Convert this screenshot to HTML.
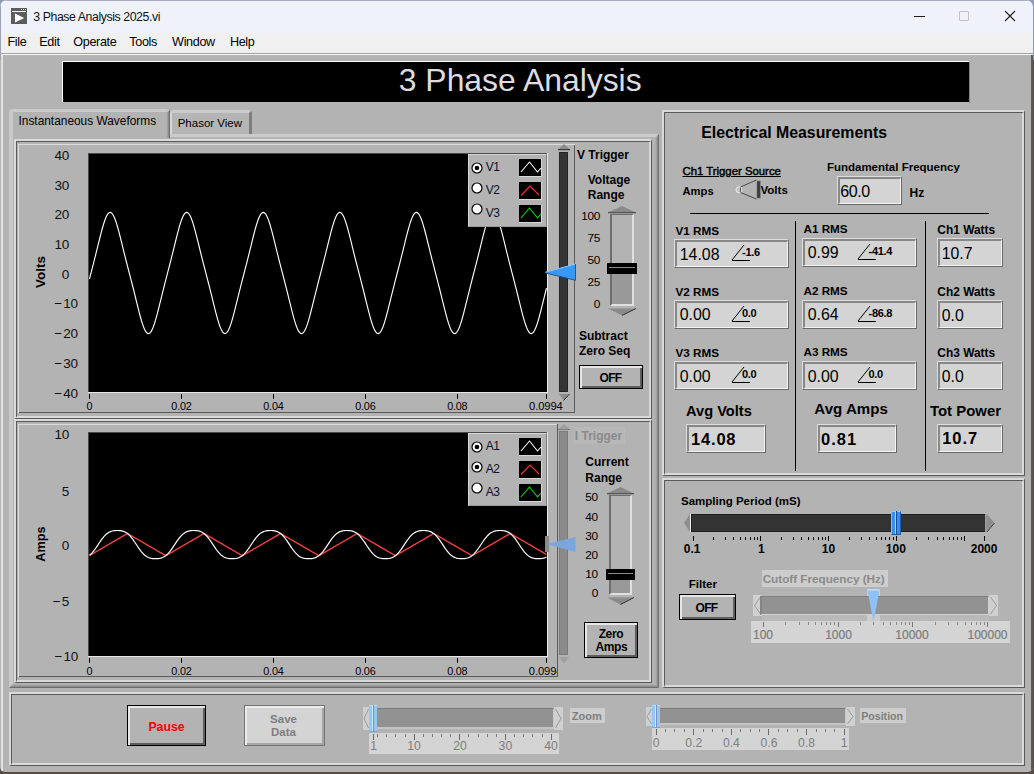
<!DOCTYPE html>
<html><head><meta charset="utf-8">
<style>
*{margin:0;padding:0;box-sizing:border-box}
html,body{width:1034px;height:774px;overflow:hidden;background:#584c42;font-family:"Liberation Sans",sans-serif}
.a{position:absolute}
.t{position:absolute;white-space:nowrap;line-height:1}
.fr{position:absolute;border-top:2px solid #dadada;border-left:2px solid #dadada;border-right:1px solid #5a5a5a;border-bottom:1px solid #5a5a5a}
.fr>.in{position:absolute;left:0;top:0;right:0;bottom:0;border-top:1px solid #5a5a5a;border-left:1px solid #5a5a5a;border-right:2px solid #dadada;border-bottom:2px solid #dadada}
.nb{position:absolute;background:#d4d4d4;border-top:1px solid #dedede;border-left:1px solid #dedede;border-right:1px solid #6a6a6a;border-bottom:1px solid #6a6a6a}
.nb>.in{position:absolute;left:0;top:0;right:0;bottom:0;border-top:2px solid #888888;border-left:2px solid #888888;border-right:1px solid #f4f4f4;border-bottom:1px solid #f4f4f4}
svg{position:absolute;overflow:visible}
</style></head><body>
<div class="a" style="left:0;top:0;width:1034px;height:60px;background:#8d9ab8"></div>
<div class="a" style="left:0;top:0;width:1033px;height:772px;background:#b3b3b3;border-radius:7px 7px 5px 5px;overflow:hidden">

<div class="a" style="left:0px;top:0px;width:1034px;height:33px;background:#eff2fa"></div>
<div class="a" style="left:0px;top:0px;width:1034px;height:1px;background:#a6acbc"></div>
<div class="a" style="left:0px;top:33px;width:1034px;height:20px;background:#f0f0f0"></div>
<div class="a" style="left:0px;top:53px;width:1034px;height:1px;background:#a2a2a2"></div>
<div class="a" style="left:0px;top:54px;width:1034px;height:1px;background:#fafafa"></div>
<div class="a" style="left:0px;top:0px;width:1px;height:60px;background:#9aa2b8"></div>
<div class="a" style="left:1px;top:55px;width:2px;height:717px;background:#e2e2e2"></div>
<div class="a" style="left:1031px;top:55px;width:2px;height:717px;background:#5a5a5a"></div>
<svg style="left:11px;top:8px" width="16" height="16" viewBox="0 0 16 16">
<rect x="0" y="0" width="16" height="16" fill="#5c5c5c"/>
<rect x="1" y="3" width="14" height="1" fill="#f4f4f4"/>
<rect x="10" y="1" width="1" height="1" fill="#e8e8e8"/><rect x="12" y="1" width="1" height="1" fill="#e8e8e8"/><rect x="14" y="1" width="1" height="1" fill="#e8e8e8"/>
<path d="M4 5.6 L13.2 10.1 L4 14.6 Z" fill="#fff"/>
</svg>
<div class="t" style="left:33.34px;top:11.00px;font-size:12.3px;color:#111;letter-spacing:-0.42px">3 Phase Analysis 2025.vi</div>
<div class="a" style="left:914px;top:16px;width:11px;height:1px;background:#1e1e1e"></div>
<div class="a" style="left:959px;top:11px;width:10px;height:10px;border:1px solid #c2c2c2;border-radius:1px"></div>
<svg style="left:1004px;top:10px" width="12" height="12" viewBox="0 0 12 12"><path d="M1 1L11 11M11 1L1 11" stroke="#1e1e1e" stroke-width="1.1"/></svg>
<div class="t" style="left:7.42px;top:36.00px;font-size:12.6px;color:#000;letter-spacing:-0.35px">File</div>
<div class="t" style="left:39.32px;top:36.00px;font-size:12.6px;color:#000;letter-spacing:-0.35px">Edit</div>
<div class="t" style="left:73.32px;top:36.00px;font-size:12.6px;color:#000;letter-spacing:-0.35px">Operate</div>
<div class="t" style="left:129.32px;top:36.00px;font-size:12.6px;color:#000;letter-spacing:-0.35px">Tools</div>
<div class="t" style="left:172.12px;top:36.00px;font-size:12.6px;color:#000;letter-spacing:-0.35px">Window</div>
<div class="t" style="left:229.92px;top:36.00px;font-size:12.6px;color:#000;letter-spacing:-0.35px">Help</div>
<div class="a" style="left:62px;top:61px;width:907px;height:41px;background:#fff"></div>
<div class="a" style="left:63px;top:62px;width:906px;height:40px;background:#000"></div>
<div class="a" style="left:969px;top:62px;width:1px;height:41px;background:#808080"></div>
<div class="t" style="left:398.77px;top:65.00px;font-size:31.9px;color:#dcdce2;">3 Phase Analysis</div>
<div class="a" style="left:170px;top:110px;width:82px;height:25px;background:#b5b5b5;border-top:3px solid #cbcbcb;border-left:2px solid #d6d6d6;border-right:3px solid #7e7e7e;border-radius:4px 4px 0 0"></div>
<div class="a" style="left:172px;top:134px;width:77px;height:3px;background:#cbcbcb"></div>
<div class="t" style="left:177.69px;top:118.00px;font-size:11.5px;color:#000;">Phasor View</div>
<div class="a" style="left:9px;top:134px;width:650px;height:554px;border-top:3px solid #cbcbcb;border-left:4px solid #c9c9c9"></div>
<div class="a" style="left:655px;top:134px;width:4px;height:554px;background:linear-gradient(to right,#b4b4b4,#a2a2a2 35%,#8a8a8a 65%,#5e5e5e);clip-path:polygon(0 4px,100% 0,100% 100%,0 calc(100% - 4px))"></div>
<div class="a" style="left:9px;top:684px;width:650px;height:4px;background:linear-gradient(to bottom,#b4b4b4,#a2a2a2 35%,#8a8a8a 65%,#5e5e5e);clip-path:polygon(4px 0,calc(100% - 4px) 0,100% 100%,0 100%)"></div>
<div class="a" style="left:9px;top:109px;width:161px;height:31px;background:#b3b3b3;border-top:3px solid #cbcbcb;border-left:4px solid #c9c9c9;border-radius:4px 4px 0 0"></div>
<div class="a" style="left:166px;top:110px;width:4px;height:28px;background:linear-gradient(to right,#b4b4b4,#a2a2a2 35%,#8a8a8a 65%,#5e5e5e);clip-path:polygon(0 3px,100% 0,100% 100%,0 100%)"></div>
<div class="t" style="left:18.47px;top:116.00px;font-size:11.9px;color:#000;">Instantaneous Waveforms</div>
<div class="fr" style="left:14px;top:139px;width:638px;height:280px"><div class="in"></div></div>
<div class="fr" style="left:14px;top:419px;width:638px;height:264px"><div class="in"></div></div>
<div class="fr" style="left:662px;top:110px;width:363px;height:366px"><div class="in"></div></div>
<div class="fr" style="left:662px;top:478px;width:363px;height:210px"><div class="in"></div></div>
<div class="fr" style="left:9px;top:692px;width:1016px;height:74px"><div class="in"></div></div>
<div class="a" style="left:18px;top:144px;width:557px;height:1px;background:#dcdcdc"></div>
<div class="a" style="left:18px;top:144px;width:1px;height:269px;background:#dcdcdc"></div>
<div class="a" style="left:19px;top:412px;width:556px;height:1px;background:#5a5a5a"></div>
<div class="a" style="left:574px;top:145px;width:1px;height:268px;background:#5a5a5a"></div>
<div class="a" style="left:18px;top:424px;width:540px;height:1px;background:#dcdcdc"></div>
<div class="a" style="left:18px;top:424px;width:1px;height:253px;background:#dcdcdc"></div>
<div class="a" style="left:19px;top:676px;width:539px;height:1px;background:#5a5a5a"></div>
<div class="a" style="left:557px;top:424px;width:1px;height:253px;background:#5a5a5a"></div>
<div class="a" style="left:88px;top:153px;width:459px;height:239px;background:#000;border-left:1px solid #4a4a4a;border-top:1px solid #4a4a4a"></div>
<div class="a" style="left:547px;top:153px;width:1px;height:240px;background:#e8e8e8"></div>
<div class="a" style="left:88px;top:392px;width:460px;height:1px;background:#e8e8e8"></div>
<svg style="left:0;top:0" width="1034" height="774"><path d="M89.5,278.78 L90.5,274.92 L91.5,271.08 L92.5,267.22 L93.5,263.33 L94.5,259.41 L95.5,255.43 L96.5,251.41 L97.5,247.36 L98.5,243.29 L99.5,239.25 L100.5,235.27 L101.5,231.42 L102.5,227.75 L103.5,224.33 L104.5,221.22 L105.5,218.50 L106.5,216.22 L107.5,214.44 L108.5,213.19 L109.5,212.52 L110.5,212.44 L111.5,212.95 L112.5,214.03 L113.5,215.67 L114.5,217.81 L115.5,220.42 L116.5,223.43 L117.5,226.77 L118.5,230.37 L119.5,234.18 L120.5,238.13 L121.5,242.16 L122.5,246.22 L123.5,250.28 L124.5,254.31 L125.5,258.30 L126.5,262.24 L127.5,266.13 L128.5,270.00 L129.5,273.85 L130.5,277.70 L131.5,281.58 L132.5,285.49 L133.5,289.45 L134.5,293.46 L135.5,297.50 L136.5,301.57 L137.5,305.62 L138.5,309.62 L139.5,313.52 L140.5,317.24 L141.5,320.74 L142.5,323.94 L143.5,326.78 L144.5,329.19 L145.5,331.12 L146.5,332.52 L147.5,333.35 L148.5,333.60 L149.5,333.26 L150.5,332.33 L151.5,330.84 L152.5,328.84 L153.5,326.35 L154.5,323.45 L155.5,320.20 L156.5,316.66 L157.5,312.90 L158.5,308.99 L159.5,304.98 L160.5,300.92 L161.5,296.86 L162.5,292.81 L163.5,288.81 L164.5,284.86 L165.5,280.95 L166.5,277.08 L167.5,273.23 L168.5,269.38 L169.5,265.51 L170.5,261.61 L171.5,257.66 L172.5,253.67 L173.5,249.63 L174.5,245.57 L175.5,241.51 L176.5,237.49 L177.5,233.56 L178.5,229.78 L179.5,226.21 L180.5,222.92 L181.5,219.98 L182.5,217.44 L183.5,215.37 L184.5,213.82 L185.5,212.83 L186.5,212.41 L187.5,212.59 L188.5,213.35 L189.5,214.69 L190.5,216.55 L191.5,218.91 L192.5,221.70 L193.5,224.86 L194.5,228.32 L195.5,232.03 L196.5,235.90 L197.5,239.89 L198.5,243.94 L199.5,248.01 L200.5,252.06 L201.5,256.07 L202.5,260.04 L203.5,263.96 L204.5,267.84 L205.5,271.69 L206.5,275.54 L207.5,279.40 L208.5,283.29 L209.5,287.23 L210.5,291.21 L211.5,295.23 L212.5,299.29 L213.5,303.36 L214.5,307.39 L215.5,311.35 L216.5,315.18 L217.5,318.81 L218.5,322.19 L219.5,325.24 L220.5,327.90 L221.5,330.10 L222.5,331.80 L223.5,332.95 L224.5,333.53 L225.5,333.52 L226.5,332.92 L227.5,331.74 L228.5,330.02 L229.5,327.80 L230.5,325.12 L231.5,322.06 L232.5,318.67 L233.5,315.03 L234.5,311.20 L235.5,307.23 L236.5,303.20 L237.5,299.13 L238.5,295.07 L239.5,291.05 L240.5,287.07 L241.5,283.14 L242.5,279.25 L243.5,275.39 L244.5,271.54 L245.5,267.68 L246.5,263.80 L247.5,259.88 L248.5,255.91 L249.5,251.90 L250.5,247.85 L251.5,243.78 L252.5,239.73 L253.5,235.75 L254.5,231.88 L255.5,228.18 L256.5,224.73 L257.5,221.58 L258.5,218.81 L259.5,216.47 L260.5,214.62 L261.5,213.31 L262.5,212.57 L263.5,212.42 L264.5,212.85 L265.5,213.87 L266.5,215.44 L267.5,217.53 L268.5,220.09 L269.5,223.05 L270.5,226.35 L271.5,229.93 L272.5,233.72 L273.5,237.65 L274.5,241.67 L275.5,245.73 L276.5,249.79 L277.5,253.83 L278.5,257.82 L279.5,261.77 L280.5,265.67 L281.5,269.54 L282.5,273.38 L283.5,277.24 L284.5,281.11 L285.5,285.02 L286.5,288.97 L287.5,292.97 L288.5,297.02 L289.5,301.08 L290.5,305.14 L291.5,309.15 L292.5,313.06 L293.5,316.81 L294.5,320.34 L295.5,323.58 L296.5,326.46 L297.5,328.92 L298.5,330.91 L299.5,332.38 L300.5,333.28 L301.5,333.60 L302.5,333.33 L303.5,332.47 L304.5,331.05 L305.5,329.10 L306.5,326.67 L307.5,323.82 L308.5,320.61 L309.5,317.10 L310.5,313.36 L311.5,309.46 L312.5,305.46 L313.5,301.41 L314.5,297.34 L315.5,293.30 L316.5,289.29 L317.5,285.33 L318.5,281.42 L319.5,277.55 L320.5,273.69 L321.5,269.84 L322.5,265.98 L323.5,262.08 L324.5,258.14 L325.5,254.15 L326.5,250.12 L327.5,246.06 L328.5,241.99 L329.5,237.97 L330.5,234.03 L331.5,230.22 L332.5,226.63 L333.5,223.30 L334.5,220.31 L335.5,217.72 L336.5,215.59 L337.5,213.98 L338.5,212.91 L339.5,212.43 L340.5,212.54 L341.5,213.23 L342.5,214.50 L343.5,216.30 L344.5,218.60 L345.5,221.34 L346.5,224.46 L347.5,227.89 L348.5,231.57 L349.5,235.43 L350.5,239.41 L351.5,243.45 L352.5,247.52 L353.5,251.57 L354.5,255.59 L355.5,259.56 L356.5,263.49 L357.5,267.37 L358.5,271.23 L359.5,275.08 L360.5,278.94 L361.5,282.82 L362.5,286.75 L363.5,290.73 L364.5,294.75 L365.5,298.81 L366.5,302.87 L367.5,306.91 L368.5,310.88 L369.5,314.73 L370.5,318.39 L371.5,321.80 L372.5,324.89 L373.5,327.60 L374.5,329.86 L375.5,331.62 L376.5,332.85 L377.5,333.49 L378.5,333.55 L379.5,333.02 L380.5,331.91 L381.5,330.26 L382.5,328.09 L383.5,325.47 L384.5,322.45 L385.5,319.09 L386.5,315.48 L387.5,311.66 L388.5,307.71 L389.5,303.68 L390.5,299.62 L391.5,295.56 L392.5,291.53 L393.5,287.54 L394.5,283.61 L395.5,279.71 L396.5,275.85 L397.5,272.00 L398.5,268.15 L399.5,264.27 L400.5,260.35 L401.5,256.39 L402.5,252.38 L403.5,248.33 L404.5,244.27 L405.5,240.22 L406.5,236.22 L407.5,232.33 L408.5,228.61 L409.5,225.13 L410.5,221.94 L411.5,219.12 L412.5,216.72 L413.5,214.82 L414.5,213.44 L415.5,212.63 L416.5,212.40 L417.5,212.77 L418.5,213.72 L419.5,215.23 L420.5,217.26 L421.5,219.76 L422.5,222.67 L423.5,225.94 L424.5,229.49 L425.5,233.25 L426.5,237.17 L427.5,241.18 L428.5,245.24 L429.5,249.31 L430.5,253.35 L431.5,257.35 L432.5,261.30 L433.5,265.20 L434.5,269.07 L435.5,272.92 L436.5,276.77 L437.5,280.64 L438.5,284.55 L439.5,288.49 L440.5,292.49 L441.5,296.53 L442.5,300.59 L443.5,304.65 L444.5,308.67 L445.5,312.59 L446.5,316.37 L447.5,319.93 L448.5,323.20 L449.5,326.13 L450.5,328.65 L451.5,330.70 L452.5,332.23 L453.5,333.20 L454.5,333.59 L455.5,333.39 L456.5,332.60 L457.5,331.25 L458.5,329.36 L459.5,326.99 L460.5,324.18 L461.5,321.01 L462.5,317.53 L463.5,313.82 L464.5,309.94 L465.5,305.95 L466.5,301.90 L467.5,297.83 L468.5,293.78 L469.5,289.77 L470.5,285.80 L471.5,281.89 L472.5,278.01 L473.5,274.15 L474.5,270.31 L475.5,266.44 L476.5,262.55 L477.5,258.62 L478.5,254.63 L479.5,250.60 L480.5,246.54 L481.5,242.48 L482.5,238.45 L483.5,234.49 L484.5,230.67 L485.5,227.05 L486.5,223.68 L487.5,220.65 L488.5,218.01 L489.5,215.82 L490.5,214.14 L491.5,213.01 L492.5,212.46 L493.5,212.49 L494.5,213.12 L495.5,214.32 L496.5,216.06 L497.5,218.30 L498.5,220.99 L499.5,224.07 L500.5,227.47 L501.5,231.12 L502.5,234.96 L503.5,238.93 L504.5,242.97 L505.5,247.03 L506.5,251.09 L507.5,255.11 L508.5,259.09 L509.5,263.02 L510.5,266.91 L511.5,270.77 L512.5,274.62 L513.5,278.47 L514.5,282.35 L515.5,286.28 L516.5,290.25 L517.5,294.26 L518.5,298.32 L519.5,302.38 L520.5,306.43 L521.5,310.41 L522.5,314.28 L523.5,317.96 L524.5,321.41 L525.5,324.54 L526.5,327.30 L527.5,329.62 L528.5,331.44 L529.5,332.73 L530.5,333.45 L531.5,333.58 L532.5,333.12 L533.5,332.08 L534.5,330.48 L535.5,328.37 L536.5,325.80 L537.5,322.83 L538.5,319.51 L539.5,315.92 L540.5,312.13 L541.5,308.19 L542.5,304.17 L543.5,300.11 L544.5,296.04 L545.5,292.01 L546.5,288.02" fill="none" stroke="#fff" stroke-width="1.15"/></svg>
<div class="t" style="left:68.90px;top:149.00px;font-size:13.5px;color:#111;transform:translateX(-100%);letter-spacing:-0.3px">40</div>
<div class="t" style="left:68.90px;top:179.00px;font-size:13.5px;color:#111;transform:translateX(-100%);letter-spacing:-0.3px">30</div>
<div class="t" style="left:68.90px;top:208.00px;font-size:13.5px;color:#111;transform:translateX(-100%);letter-spacing:-0.3px">20</div>
<div class="t" style="left:68.90px;top:238.00px;font-size:13.5px;color:#111;transform:translateX(-100%);letter-spacing:-0.3px">10</div>
<div class="t" style="left:68.90px;top:268.00px;font-size:13.5px;color:#111;transform:translateX(-100%);letter-spacing:-0.3px">0</div>
<div class="t" style="left:77.70px;top:297.00px;font-size:13.5px;color:#111;transform:translateX(-100%);letter-spacing:-0.3px"><span style='letter-spacing:1.2px'>&minus;</span>10</div>
<div class="t" style="left:77.70px;top:327.00px;font-size:13.5px;color:#111;transform:translateX(-100%);letter-spacing:-0.3px"><span style='letter-spacing:1.2px'>&minus;</span>20</div>
<div class="t" style="left:77.70px;top:357.00px;font-size:13.5px;color:#111;transform:translateX(-100%);letter-spacing:-0.3px"><span style='letter-spacing:1.2px'>&minus;</span>30</div>
<div class="t" style="left:77.70px;top:387.00px;font-size:13.5px;color:#111;transform:translateX(-100%);letter-spacing:-0.3px"><span style='letter-spacing:1.2px'>&minus;</span>40</div>
<div class="t" style="left:40.5px;top:272.3px;font-size:13.4px;font-weight:bold;color:#000;transform:translate(-50%,-50%) rotate(-90deg)">Volts</div>
<div class="a" style="left:89px;top:394px;width:1px;height:5px;background:#000"></div>
<div class="t" style="left:89.50px;top:401.00px;font-size:10.8px;color:#000;transform:translateX(-50%);letter-spacing:-0.2px">0</div>
<div class="a" style="left:181px;top:394px;width:1px;height:5px;background:#000"></div>
<div class="t" style="left:181.45px;top:401.00px;font-size:10.8px;color:#000;transform:translateX(-50%);letter-spacing:-0.2px">0.02</div>
<div class="a" style="left:273px;top:394px;width:1px;height:5px;background:#000"></div>
<div class="t" style="left:273.40px;top:401.00px;font-size:10.8px;color:#000;transform:translateX(-50%);letter-spacing:-0.2px">0.04</div>
<div class="a" style="left:365px;top:394px;width:1px;height:5px;background:#000"></div>
<div class="t" style="left:365.35px;top:401.00px;font-size:10.8px;color:#000;transform:translateX(-50%);letter-spacing:-0.2px">0.06</div>
<div class="a" style="left:457px;top:394px;width:1px;height:5px;background:#000"></div>
<div class="t" style="left:457.30px;top:401.00px;font-size:10.8px;color:#000;transform:translateX(-50%);letter-spacing:-0.2px">0.08</div>
<div class="a" style="left:546px;top:394px;width:1px;height:5px;background:#000"></div>
<div class="t" style="left:529.02px;top:401.00px;font-size:11.2px;color:#000;letter-spacing:-0.1px">0.0994</div>
<div class="a" style="left:468px;top:154px;width:79px;height:73px;background:#b3b3b3;border-left:1px solid #d8d8d8;border-top:1px solid #d8d8d8;border-right:1px solid #7a7a7a;border-bottom:1px solid #9a9a9a"></div>
<svg style="left:471px;top:161.6px" width="12" height="12" viewBox="0 0 12 12"><circle cx="6" cy="6" r="5" fill="#fff" stroke="#000" stroke-width="1.2"/><circle cx="6" cy="6" r="2.3" fill="#000"/></svg>
<div class="t" style="left:485.76px;top:161.00px;font-size:12px;color:#10102a;letter-spacing:-0.6px">V1</div>
<div class="a" style="left:519px;top:159px;width:23px;height:18px;background:#000;border-right:1px solid #d8d8d8;border-bottom:1px solid #d8d8d8"></div>
<svg style="left:519px;top:159px" width="23" height="18"><path d="M2 13 L10.5 3 L18.5 13 L22 9" fill="none" stroke="#ffffff" stroke-width="1.1"/></svg>
<svg style="left:471px;top:182.2px" width="12" height="12" viewBox="0 0 12 12"><circle cx="6" cy="6" r="5" fill="#fff" stroke="#000" stroke-width="1.2"/></svg>
<div class="t" style="left:485.76px;top:184.00px;font-size:12px;color:#10102a;letter-spacing:-0.6px">V2</div>
<div class="a" style="left:519px;top:182px;width:23px;height:18px;background:#000;border-right:1px solid #d8d8d8;border-bottom:1px solid #d8d8d8"></div>
<svg style="left:519px;top:182px" width="23" height="18"><path d="M2 13.5 L11 4 L20 13" fill="none" stroke="#ff3030" stroke-width="1.1"/></svg>
<svg style="left:471px;top:202.9px" width="12" height="12" viewBox="0 0 12 12"><circle cx="6" cy="6" r="5" fill="#fff" stroke="#000" stroke-width="1.2"/></svg>
<div class="t" style="left:485.76px;top:207.00px;font-size:12px;color:#10102a;letter-spacing:-0.6px">V3</div>
<div class="a" style="left:519px;top:205px;width:23px;height:18px;background:#000;border-right:1px solid #d8d8d8;border-bottom:1px solid #d8d8d8"></div>
<svg style="left:519px;top:205px" width="23" height="18"><path d="M2 13 L10.5 3 L18.5 13 L22 9" fill="none" stroke="#00e000" stroke-width="1.1"/></svg>
<svg style="left:557px;top:143px" width="14" height="10"><path d="M1 6.5 L7 1 L13 6.5 Z" fill="#8c8c8c"/><rect x="1" y="6" width="12" height="1.2" fill="#3a3a3a"/></svg>
<div class="a" style="left:559px;top:152px;width:9px;height:240px;background:#343434;border:1px solid #222"></div>
<svg style="left:557px;top:393px" width="14" height="10"><path d="M2 1 L12 1 L7 7.5 Z" fill="#8c8c8c"/><path d="M12.5 1 L6.5 7.5" stroke="#2a2a2a" stroke-width="1"/></svg>
<svg style="left:544px;top:263px" width="34" height="20"><path d="M1 9.5 L31.5 1 L31.5 17 Z" fill="#3898f8"/><path d="M1 9.3 L31.5 1" stroke="#8cc8ff" stroke-width="1"/><path d="M1.5 10 L31.5 17.3" stroke="#1a5090" stroke-width="1"/><path d="M31.5 1 L31.5 17.5" stroke="#1a5aa0" stroke-width="1"/></svg>
<div class="t" style="left:576.96px;top:149.00px;font-size:12px;color:#000;font-weight:bold;">V Trigger</div>
<div class="t" style="left:587.76px;top:174.00px;font-size:12px;color:#000;font-weight:bold;">Voltage</div>
<div class="t" style="left:587.76px;top:189.00px;font-size:12px;color:#000;font-weight:bold;">Range</div>
<div class="t" style="left:600.00px;top:211.00px;font-size:11.8px;color:#000;transform:translateX(-100%);letter-spacing:-0.3px">100</div>
<div class="t" style="left:600.00px;top:233.00px;font-size:11.8px;color:#000;transform:translateX(-100%);letter-spacing:-0.3px">75</div>
<div class="t" style="left:600.00px;top:255.00px;font-size:11.8px;color:#000;transform:translateX(-100%);letter-spacing:-0.3px">50</div>
<div class="t" style="left:600.00px;top:277.00px;font-size:11.8px;color:#000;transform:translateX(-100%);letter-spacing:-0.3px">25</div>
<div class="t" style="left:600.00px;top:299.00px;font-size:11.8px;color:#000;transform:translateX(-100%);letter-spacing:-0.3px">0</div>
<svg style="left:607px;top:205px" width="30" height="10"><path d="M1 7.5 L15.0 1 L29 7.5 Z" fill="#8a8a8a"/><rect x="1" y="7" width="28" height="1.3" fill="#555"/></svg>
<div class="a" style="left:610px;top:214px;width:24px;height:92px;background:#b3b3b3;border-left:2px solid #6e6e6e;border-top:1px solid #6e6e6e;border-right:2px solid #e0e0e0;border-bottom:2px solid #e0e0e0"></div>
<div class="a" style="left:612px;top:273px;width:20px;height:31px;background:#999999"></div>
<svg style="left:607px;top:307px" width="30" height="10"><path d="M1 1.5 L29 1.5 L15.0 8.5 Z" fill="#8a8a8a"/><path d="M29 1.5 L15.0 8.5" stroke="#333" stroke-width="1"/></svg>
<div class="a" style="left:607px;top:263px;width:30px;height:11px;background:#000"></div>
<div class="a" style="left:609px;top:267px;width:26px;height:1px;background:#8a8a8a"></div>
<div class="t" style="left:578.96px;top:330.00px;font-size:12px;color:#000;font-weight:bold;">Subtract</div>
<div class="t" style="left:578.96px;top:345.00px;font-size:12px;color:#000;font-weight:bold;">Zero Seq</div>
<div class="a" style="left:579px;top:365px;width:64px;height:24px;background:#b3b3b3;border:1px solid #000;box-shadow:inset 2px 2px 0 #e6e6e6, inset -2px -2px 0 #5e5e5e"></div>
<div class="t" style="left:610.50px;top:372.00px;font-size:12px;color:#000;font-weight:bold;transform:translateX(-50%);letter-spacing:-0.6px">OFF</div>
<div class="a" style="left:88px;top:432px;width:459px;height:224px;background:#000;border-left:1px solid #4a4a4a;border-top:1px solid #4a4a4a"></div>
<div class="a" style="left:547px;top:432px;width:1px;height:225px;background:#e8e8e8"></div>
<div class="a" style="left:88px;top:656px;width:460px;height:1px;background:#e8e8e8"></div>
<svg style="left:0;top:0" width="1034" height="774"><path d="M89.5,555.53 L90.5,554.95 L91.5,554.37 L92.5,553.79 L93.5,553.21 L94.5,552.63 L95.5,552.05 L96.5,551.47 L97.5,550.89 L98.5,550.31 L99.5,549.73 L100.5,549.15 L101.5,548.57 L102.5,547.99 L103.5,547.41 L104.5,546.83 L105.5,546.25 L106.5,545.67 L107.5,545.09 L108.5,544.51 L109.5,543.93 L110.5,543.35 L111.5,542.77 L112.5,542.19 L113.5,541.61 L114.5,541.03 L115.5,540.45 L116.5,539.87 L117.5,539.29 L118.5,538.71 L119.5,538.13 L120.5,537.55 L121.5,536.97 L122.5,536.39 L123.5,535.81 L124.5,535.23 L125.5,534.65 L126.5,534.07 L127.5,533.51 L128.5,534.09 L129.5,534.67 L130.5,535.25 L131.5,535.83 L132.5,536.41 L133.5,536.99 L134.5,537.57 L135.5,538.15 L136.5,538.73 L137.5,539.31 L138.5,539.89 L139.5,540.47 L140.5,541.05 L141.5,541.63 L142.5,542.21 L143.5,542.79 L144.5,543.37 L145.5,543.95 L146.5,544.53 L147.5,545.11 L148.5,545.69 L149.5,546.27 L150.5,546.85 L151.5,547.43 L152.5,548.01 L153.5,548.59 L154.5,549.17 L155.5,549.75 L156.5,550.33 L157.5,550.91 L158.5,551.49 L159.5,552.07 L160.5,552.65 L161.5,553.23 L162.5,553.81 L163.5,554.39 L164.5,554.97 L165.5,555.55 L166.5,555.27 L167.5,554.69 L168.5,554.11 L169.5,553.53 L170.5,552.95 L171.5,552.37 L172.5,551.79 L173.5,551.21 L174.5,550.63 L175.5,550.05 L176.5,549.47 L177.5,548.89 L178.5,548.31 L179.5,547.73 L180.5,547.15 L181.5,546.57 L182.5,545.99 L183.5,545.41 L184.5,544.83 L185.5,544.25 L186.5,543.67 L187.5,543.09 L188.5,542.51 L189.5,541.93 L190.5,541.35 L191.5,540.77 L192.5,540.19 L193.5,539.61 L194.5,539.03 L195.5,538.45 L196.5,537.87 L197.5,537.29 L198.5,536.71 L199.5,536.13 L200.5,535.55 L201.5,534.97 L202.5,534.39 L203.5,533.81 L204.5,533.77 L205.5,534.35 L206.5,534.93 L207.5,535.51 L208.5,536.09 L209.5,536.67 L210.5,537.25 L211.5,537.83 L212.5,538.41 L213.5,538.99 L214.5,539.57 L215.5,540.15 L216.5,540.73 L217.5,541.31 L218.5,541.89 L219.5,542.47 L220.5,543.05 L221.5,543.63 L222.5,544.21 L223.5,544.79 L224.5,545.37 L225.5,545.95 L226.5,546.53 L227.5,547.11 L228.5,547.69 L229.5,548.27 L230.5,548.85 L231.5,549.43 L232.5,550.01 L233.5,550.58 L234.5,551.16 L235.5,551.74 L236.5,552.32 L237.5,552.90 L238.5,553.48 L239.5,554.06 L240.5,554.64 L241.5,555.22 L242.5,555.60 L243.5,555.02 L244.5,554.44 L245.5,553.86 L246.5,553.28 L247.5,552.70 L248.5,552.12 L249.5,551.54 L250.5,550.96 L251.5,550.38 L252.5,549.80 L253.5,549.22 L254.5,548.64 L255.5,548.06 L256.5,547.48 L257.5,546.90 L258.5,546.32 L259.5,545.74 L260.5,545.16 L261.5,544.58 L262.5,544.00 L263.5,543.42 L264.5,542.84 L265.5,542.26 L266.5,541.68 L267.5,541.10 L268.5,540.52 L269.5,539.94 L270.5,539.36 L271.5,538.78 L272.5,538.20 L273.5,537.62 L274.5,537.04 L275.5,536.46 L276.5,535.88 L277.5,535.30 L278.5,534.72 L279.5,534.14 L280.5,533.56 L281.5,534.02 L282.5,534.60 L283.5,535.18 L284.5,535.76 L285.5,536.34 L286.5,536.92 L287.5,537.50 L288.5,538.08 L289.5,538.66 L290.5,539.24 L291.5,539.82 L292.5,540.40 L293.5,540.98 L294.5,541.56 L295.5,542.14 L296.5,542.72 L297.5,543.30 L298.5,543.88 L299.5,544.46 L300.5,545.04 L301.5,545.62 L302.5,546.20 L303.5,546.78 L304.5,547.36 L305.5,547.94 L306.5,548.52 L307.5,549.10 L308.5,549.68 L309.5,550.26 L310.5,550.84 L311.5,551.42 L312.5,552.00 L313.5,552.58 L314.5,553.16 L315.5,553.74 L316.5,554.32 L317.5,554.90 L318.5,555.48 L319.5,555.34 L320.5,554.76 L321.5,554.18 L322.5,553.60 L323.5,553.02 L324.5,552.44 L325.5,551.86 L326.5,551.28 L327.5,550.70 L328.5,550.12 L329.5,549.54 L330.5,548.96 L331.5,548.38 L332.5,547.80 L333.5,547.22 L334.5,546.64 L335.5,546.06 L336.5,545.48 L337.5,544.90 L338.5,544.32 L339.5,543.74 L340.5,543.16 L341.5,542.58 L342.5,542.00 L343.5,541.42 L344.5,540.84 L345.5,540.26 L346.5,539.68 L347.5,539.10 L348.5,538.52 L349.5,537.94 L350.5,537.36 L351.5,536.78 L352.5,536.20 L353.5,535.62 L354.5,535.04 L355.5,534.46 L356.5,533.88 L357.5,533.70 L358.5,534.28 L359.5,534.86 L360.5,535.44 L361.5,536.02 L362.5,536.60 L363.5,537.18 L364.5,537.76 L365.5,538.34 L366.5,538.92 L367.5,539.50 L368.5,540.08 L369.5,540.66 L370.5,541.24 L371.5,541.82 L372.5,542.40 L373.5,542.98 L374.5,543.56 L375.5,544.14 L376.5,544.72 L377.5,545.30 L378.5,545.88 L379.5,546.46 L380.5,547.04 L381.5,547.62 L382.5,548.20 L383.5,548.78 L384.5,549.36 L385.5,549.94 L386.5,550.52 L387.5,551.10 L388.5,551.68 L389.5,552.26 L390.5,552.84 L391.5,553.42 L392.5,553.99 L393.5,554.57 L394.5,555.15 L395.5,555.67 L396.5,555.09 L397.5,554.51 L398.5,553.93 L399.5,553.35 L400.5,552.77 L401.5,552.19 L402.5,551.61 L403.5,551.03 L404.5,550.45 L405.5,549.87 L406.5,549.29 L407.5,548.71 L408.5,548.13 L409.5,547.55 L410.5,546.97 L411.5,546.39 L412.5,545.81 L413.5,545.23 L414.5,544.65 L415.5,544.07 L416.5,543.49 L417.5,542.91 L418.5,542.33 L419.5,541.75 L420.5,541.17 L421.5,540.59 L422.5,540.01 L423.5,539.43 L424.5,538.85 L425.5,538.27 L426.5,537.69 L427.5,537.11 L428.5,536.53 L429.5,535.95 L430.5,535.37 L431.5,534.79 L432.5,534.21 L433.5,533.63 L434.5,533.95 L435.5,534.53 L436.5,535.11 L437.5,535.69 L438.5,536.27 L439.5,536.85 L440.5,537.43 L441.5,538.01 L442.5,538.59 L443.5,539.17 L444.5,539.75 L445.5,540.33 L446.5,540.91 L447.5,541.49 L448.5,542.07 L449.5,542.65 L450.5,543.23 L451.5,543.81 L452.5,544.39 L453.5,544.97 L454.5,545.55 L455.5,546.13 L456.5,546.71 L457.5,547.29 L458.5,547.87 L459.5,548.45 L460.5,549.03 L461.5,549.61 L462.5,550.19 L463.5,550.77 L464.5,551.35 L465.5,551.93 L466.5,552.51 L467.5,553.09 L468.5,553.67 L469.5,554.25 L470.5,554.83 L471.5,555.41 L472.5,555.41 L473.5,554.83 L474.5,554.25 L475.5,553.67 L476.5,553.09 L477.5,552.51 L478.5,551.93 L479.5,551.35 L480.5,550.77 L481.5,550.19 L482.5,549.61 L483.5,549.03 L484.5,548.45 L485.5,547.87 L486.5,547.29 L487.5,546.71 L488.5,546.13 L489.5,545.55 L490.5,544.97 L491.5,544.39 L492.5,543.81 L493.5,543.23 L494.5,542.65 L495.5,542.07 L496.5,541.49 L497.5,540.91 L498.5,540.33 L499.5,539.75 L500.5,539.17 L501.5,538.59 L502.5,538.01 L503.5,537.43 L504.5,536.85 L505.5,536.27 L506.5,535.69 L507.5,535.11 L508.5,534.53 L509.5,533.95 L510.5,533.63 L511.5,534.21 L512.5,534.79 L513.5,535.37 L514.5,535.95 L515.5,536.53 L516.5,537.11 L517.5,537.69 L518.5,538.27 L519.5,538.85 L520.5,539.43 L521.5,540.01 L522.5,540.59 L523.5,541.17 L524.5,541.75 L525.5,542.33 L526.5,542.91 L527.5,543.49 L528.5,544.07 L529.5,544.65 L530.5,545.23 L531.5,545.81 L532.5,546.39 L533.5,546.97 L534.5,547.55 L535.5,548.13 L536.5,548.71 L537.5,549.29 L538.5,549.87 L539.5,550.45 L540.5,551.03 L541.5,551.61 L542.5,552.19 L543.5,552.77 L544.5,553.35 L545.5,553.93 L546.5,554.51" fill="none" stroke="#f04040" stroke-width="1.4"/><path d="M89.5,555.41 L90.5,554.54 L91.5,553.55 L92.5,552.45 L93.5,551.23 L94.5,549.91 L95.5,548.51 L96.5,547.05 L97.5,545.56 L98.5,544.04 L99.5,542.54 L100.5,541.07 L101.5,539.65 L102.5,538.31 L103.5,537.07 L104.5,535.93 L105.5,534.91 L106.5,534.00 L107.5,533.23 L108.5,532.57 L109.5,532.02 L110.5,531.58 L111.5,531.24 L112.5,530.97 L113.5,530.77 L114.5,530.63 L115.5,530.54 L116.5,530.50 L117.5,530.49 L118.5,530.51 L119.5,530.58 L120.5,530.69 L121.5,530.85 L122.5,531.08 L123.5,531.38 L124.5,531.77 L125.5,532.26 L126.5,532.85 L127.5,533.57 L128.5,534.40 L129.5,535.36 L130.5,536.43 L131.5,537.62 L132.5,538.91 L133.5,540.29 L134.5,541.73 L135.5,543.22 L136.5,544.73 L137.5,546.24 L138.5,547.73 L139.5,549.16 L140.5,550.52 L141.5,551.80 L142.5,552.97 L143.5,554.02 L144.5,554.96 L145.5,555.77 L146.5,556.46 L147.5,557.03 L148.5,557.50 L149.5,557.88 L150.5,558.16 L151.5,558.38 L152.5,558.53 L153.5,558.63 L154.5,558.69 L155.5,558.71 L156.5,558.70 L157.5,558.64 L158.5,558.55 L159.5,558.40 L160.5,558.19 L161.5,557.91 L162.5,557.55 L163.5,557.09 L164.5,556.52 L165.5,555.85 L166.5,555.05 L167.5,554.12 L168.5,553.08 L169.5,551.92 L170.5,550.66 L171.5,549.30 L172.5,547.88 L173.5,546.40 L174.5,544.89 L175.5,543.38 L176.5,541.89 L177.5,540.44 L178.5,539.05 L179.5,537.75 L180.5,536.55 L181.5,535.46 L182.5,534.49 L183.5,533.65 L184.5,532.92 L185.5,532.32 L186.5,531.82 L187.5,531.42 L188.5,531.11 L189.5,530.88 L190.5,530.71 L191.5,530.59 L192.5,530.52 L193.5,530.49 L194.5,530.49 L195.5,530.54 L196.5,530.62 L197.5,530.76 L198.5,530.95 L199.5,531.20 L200.5,531.54 L201.5,531.97 L202.5,532.51 L203.5,533.15 L204.5,533.92 L205.5,534.81 L206.5,535.82 L207.5,536.94 L208.5,538.18 L209.5,539.51 L210.5,540.92 L211.5,542.38 L212.5,543.89 L213.5,545.40 L214.5,546.90 L215.5,548.36 L216.5,549.77 L217.5,551.09 L218.5,552.32 L219.5,553.44 L220.5,554.45 L221.5,555.33 L222.5,556.09 L223.5,556.73 L224.5,557.25 L225.5,557.68 L226.5,558.01 L227.5,558.27 L228.5,558.45 L229.5,558.58 L230.5,558.67 L231.5,558.71 L232.5,558.71 L233.5,558.68 L234.5,558.61 L235.5,558.49 L236.5,558.31 L237.5,558.08 L238.5,557.76 L239.5,557.36 L240.5,556.85 L241.5,556.24 L242.5,555.51 L243.5,554.66 L244.5,553.68 L245.5,552.58 L246.5,551.38 L247.5,550.07 L248.5,548.68 L249.5,547.23 L250.5,545.74 L251.5,544.22 L252.5,542.72 L253.5,541.24 L254.5,539.82 L255.5,538.47 L256.5,537.21 L257.5,536.06 L258.5,535.02 L259.5,534.11 L260.5,533.31 L261.5,532.64 L262.5,532.08 L263.5,531.63 L264.5,531.27 L265.5,531.00 L266.5,530.79 L267.5,530.65 L268.5,530.55 L269.5,530.50 L270.5,530.49 L271.5,530.51 L272.5,530.57 L273.5,530.67 L274.5,530.83 L275.5,531.05 L276.5,531.34 L277.5,531.72 L278.5,532.19 L279.5,532.78 L280.5,533.47 L281.5,534.29 L282.5,535.24 L283.5,536.30 L284.5,537.47 L285.5,538.75 L286.5,540.12 L287.5,541.56 L288.5,543.04 L289.5,544.55 L290.5,546.06 L291.5,547.55 L292.5,548.99 L293.5,550.36 L294.5,551.65 L295.5,552.83 L296.5,553.90 L297.5,554.85 L298.5,555.68 L299.5,556.38 L300.5,556.97 L301.5,557.45 L302.5,557.84 L303.5,558.13 L304.5,558.36 L305.5,558.52 L306.5,558.63 L307.5,558.69 L308.5,558.71 L309.5,558.70 L310.5,558.65 L311.5,558.56 L312.5,558.42 L313.5,558.22 L314.5,557.95 L315.5,557.59 L316.5,557.15 L317.5,556.60 L318.5,555.93 L319.5,555.15 L320.5,554.24 L321.5,553.21 L322.5,552.07 L323.5,550.82 L324.5,549.47 L325.5,548.05 L326.5,546.58 L327.5,545.07 L328.5,543.56 L329.5,542.06 L330.5,540.61 L331.5,539.21 L332.5,537.90 L333.5,536.69 L334.5,535.59 L335.5,534.60 L336.5,533.74 L337.5,533.00 L338.5,532.38 L339.5,531.87 L340.5,531.46 L341.5,531.14 L342.5,530.90 L343.5,530.72 L344.5,530.60 L345.5,530.52 L346.5,530.49 L347.5,530.49 L348.5,530.53 L349.5,530.61 L350.5,530.74 L351.5,530.92 L352.5,531.17 L353.5,531.50 L354.5,531.92 L355.5,532.44 L356.5,533.07 L357.5,533.82 L358.5,534.69 L359.5,535.69 L360.5,536.80 L361.5,538.02 L362.5,539.34 L363.5,540.74 L364.5,542.20 L365.5,543.70 L366.5,545.22 L367.5,546.72 L368.5,548.19 L369.5,549.60 L370.5,550.94 L371.5,552.18 L372.5,553.32 L373.5,554.33 L374.5,555.23 L375.5,556.00 L376.5,556.66 L377.5,557.20 L378.5,557.63 L379.5,557.98 L380.5,558.24 L381.5,558.43 L382.5,558.57 L383.5,558.66 L384.5,558.70 L385.5,558.71 L386.5,558.68 L387.5,558.62 L388.5,558.50 L389.5,558.34 L390.5,558.11 L391.5,557.80 L392.5,557.41 L393.5,556.92 L394.5,556.32 L395.5,555.60 L396.5,554.76 L397.5,553.80 L398.5,552.72 L399.5,551.53 L400.5,550.23 L401.5,548.85 L402.5,547.41 L403.5,545.92 L404.5,544.41 L405.5,542.90 L406.5,541.42 L407.5,539.98 L408.5,538.63 L409.5,537.36 L410.5,536.19 L411.5,535.14 L412.5,534.21 L413.5,533.40 L414.5,532.72 L415.5,532.14 L416.5,531.68 L417.5,531.31 L418.5,531.03 L419.5,530.81 L420.5,530.66 L421.5,530.56 L422.5,530.50 L423.5,530.49 L424.5,530.50 L425.5,530.56 L426.5,530.66 L427.5,530.81 L428.5,531.02 L429.5,531.30 L430.5,531.67 L431.5,532.13 L432.5,532.70 L433.5,533.38 L434.5,534.19 L435.5,535.12 L436.5,536.16 L437.5,537.33 L438.5,538.59 L439.5,539.95 L440.5,541.38 L441.5,542.86 L442.5,544.37 L443.5,545.88 L444.5,547.37 L445.5,548.82 L446.5,550.20 L447.5,551.50 L448.5,552.69 L449.5,553.78 L450.5,554.74 L451.5,555.58 L452.5,556.30 L453.5,556.91 L454.5,557.40 L455.5,557.79 L456.5,558.10 L457.5,558.33 L458.5,558.50 L459.5,558.61 L460.5,558.68 L461.5,558.71 L462.5,558.71 L463.5,558.66 L464.5,558.57 L465.5,558.44 L466.5,558.25 L467.5,557.98 L468.5,557.64 L469.5,557.21 L470.5,556.67 L471.5,556.02 L472.5,555.25 L473.5,554.36 L474.5,553.34 L475.5,552.21 L476.5,550.97 L477.5,549.64 L478.5,548.23 L479.5,546.76 L480.5,545.25 L481.5,543.74 L482.5,542.24 L483.5,540.78 L484.5,539.38 L485.5,538.05 L486.5,536.83 L487.5,535.71 L488.5,534.72 L489.5,533.84 L490.5,533.09 L491.5,532.45 L492.5,531.93 L493.5,531.51 L494.5,531.18 L495.5,530.92 L496.5,530.74 L497.5,530.61 L498.5,530.53 L499.5,530.49 L500.5,530.49 L501.5,530.52 L502.5,530.60 L503.5,530.72 L504.5,530.89 L505.5,531.14 L506.5,531.45 L507.5,531.86 L508.5,532.37 L509.5,532.99 L510.5,533.72 L511.5,534.58 L512.5,535.56 L513.5,536.66 L514.5,537.87 L515.5,539.18 L516.5,540.57 L517.5,542.03 L518.5,543.52 L519.5,545.04 L520.5,546.54 L521.5,548.02 L522.5,549.44 L523.5,550.78 L524.5,552.04 L525.5,553.19 L526.5,554.22 L527.5,555.13 L528.5,555.92 L529.5,556.58 L530.5,557.14 L531.5,557.59 L532.5,557.94 L533.5,558.21 L534.5,558.41 L535.5,558.56 L536.5,558.65 L537.5,558.70 L538.5,558.71 L539.5,558.69 L540.5,558.63 L541.5,558.52 L542.5,558.36 L543.5,558.14 L544.5,557.84 L545.5,557.46 L546.5,556.98" fill="none" stroke="#fff" stroke-width="1.2"/></svg>
<div class="t" style="left:69.00px;top:428.00px;font-size:13.5px;color:#111;transform:translateX(-100%);letter-spacing:-0.3px">10</div>
<div class="t" style="left:69.00px;top:485.00px;font-size:13.5px;color:#111;transform:translateX(-100%);letter-spacing:-0.3px">5</div>
<div class="t" style="left:69.00px;top:539.00px;font-size:13.5px;color:#111;transform:translateX(-100%);letter-spacing:-0.3px">0</div>
<div class="t" style="left:69.00px;top:595.00px;font-size:13.5px;color:#111;transform:translateX(-100%);letter-spacing:-0.3px"><span style='letter-spacing:1.2px'>&minus;</span>5</div>
<div class="t" style="left:78.00px;top:650.00px;font-size:13.5px;color:#111;transform:translateX(-100%);letter-spacing:-0.3px"><span style='letter-spacing:1.2px'>&minus;</span>10</div>
<div class="t" style="left:41px;top:543.6px;font-size:12.7px;font-weight:bold;color:#000;transform:translate(-50%,-50%) rotate(-90deg)">Amps</div>
<div class="a" style="left:89px;top:658px;width:1px;height:5px;background:#000"></div>
<div class="t" style="left:89.50px;top:666.00px;font-size:10.8px;color:#000;transform:translateX(-50%);letter-spacing:-0.2px">0</div>
<div class="a" style="left:181px;top:658px;width:1px;height:5px;background:#000"></div>
<div class="t" style="left:181.45px;top:666.00px;font-size:10.8px;color:#000;transform:translateX(-50%);letter-spacing:-0.2px">0.02</div>
<div class="a" style="left:273px;top:658px;width:1px;height:5px;background:#000"></div>
<div class="t" style="left:273.40px;top:666.00px;font-size:10.8px;color:#000;transform:translateX(-50%);letter-spacing:-0.2px">0.04</div>
<div class="a" style="left:365px;top:658px;width:1px;height:5px;background:#000"></div>
<div class="t" style="left:365.35px;top:666.00px;font-size:10.8px;color:#000;transform:translateX(-50%);letter-spacing:-0.2px">0.06</div>
<div class="a" style="left:457px;top:658px;width:1px;height:5px;background:#000"></div>
<div class="t" style="left:457.30px;top:666.00px;font-size:10.8px;color:#000;transform:translateX(-50%);letter-spacing:-0.2px">0.08</div>
<div class="a" style="left:546px;top:658px;width:1px;height:5px;background:#000"></div>
<div class="a" style="left:500px;top:660px;width:57px;height:16px;overflow:hidden">
<div class="t" style="left:28.82px;top:6.00px;font-size:11.2px;color:#000;letter-spacing:-0.1px">0.0994</div>
</div>
<div class="a" style="left:468px;top:433px;width:79px;height:73px;background:#b3b3b3;border-left:1px solid #d8d8d8;border-top:1px solid #d8d8d8;border-right:1px solid #7a7a7a;border-bottom:1px solid #9a9a9a"></div>
<svg style="left:471px;top:440.6px" width="12" height="12" viewBox="0 0 12 12"><circle cx="6" cy="6" r="5" fill="#fff" stroke="#000" stroke-width="1.2"/><circle cx="6" cy="6" r="2.3" fill="#000"/></svg>
<div class="t" style="left:485.76px;top:440.00px;font-size:12px;color:#10102a;letter-spacing:-0.6px">A1</div>
<div class="a" style="left:519px;top:438px;width:23px;height:18px;background:#000;border-right:1px solid #d8d8d8;border-bottom:1px solid #d8d8d8"></div>
<svg style="left:519px;top:438px" width="23" height="18"><path d="M2 13 L10.5 3 L18.5 13 L22 9" fill="none" stroke="#ffffff" stroke-width="1.1"/></svg>
<svg style="left:471px;top:461.2px" width="12" height="12" viewBox="0 0 12 12"><circle cx="6" cy="6" r="5" fill="#fff" stroke="#000" stroke-width="1.2"/><circle cx="6" cy="6" r="2.3" fill="#000"/></svg>
<div class="t" style="left:485.76px;top:463.00px;font-size:12px;color:#10102a;letter-spacing:-0.6px">A2</div>
<div class="a" style="left:519px;top:461px;width:23px;height:18px;background:#000;border-right:1px solid #d8d8d8;border-bottom:1px solid #d8d8d8"></div>
<svg style="left:519px;top:461px" width="23" height="18"><path d="M2 13.5 L11 4 L20 13" fill="none" stroke="#ff3030" stroke-width="1.1"/></svg>
<svg style="left:471px;top:481.9px" width="12" height="12" viewBox="0 0 12 12"><circle cx="6" cy="6" r="5" fill="#fff" stroke="#000" stroke-width="1.2"/></svg>
<div class="t" style="left:485.76px;top:486.00px;font-size:12px;color:#10102a;letter-spacing:-0.6px">A3</div>
<div class="a" style="left:519px;top:484px;width:23px;height:18px;background:#000;border-right:1px solid #d8d8d8;border-bottom:1px solid #d8d8d8"></div>
<svg style="left:519px;top:484px" width="23" height="18"><path d="M2 13 L10.5 3 L18.5 13 L22 9" fill="none" stroke="#00e000" stroke-width="1.1"/></svg>
<div class="a" style="left:545px;top:536px;width:4px;height:16px;background:#8a8a8a"></div>
<svg style="left:557px;top:423px" width="14" height="10"><path d="M1 6.5 L7 1 L13 6.5 Z" fill="#a0a0a0"/><rect x="1" y="6" width="12" height="1" fill="#7a7a7a"/></svg>
<div class="a" style="left:559px;top:431px;width:9px;height:224px;background:#8a8a8a;border:1px solid #7a7a7a"></div>
<svg style="left:557px;top:656px" width="14" height="10"><path d="M2 1 L12 1 L7 7.5 Z" fill="#a0a0a0"/></svg>
<svg style="left:544px;top:536px" width="34" height="18"><path d="M2 8 L31.5 1 L31.5 16 Z" fill="#7aa6dc"/></svg>
<div class="a" style="left:574px;top:427px;width:51px;height:17px;background:#b8b8b8"></div>
<div class="t" style="left:574.86px;top:430.00px;font-size:12px;color:#8a8a8a;font-weight:bold;">I Trigger</div>
<div class="t" style="left:585.36px;top:456.00px;font-size:12px;color:#000;font-weight:bold;">Current</div>
<div class="t" style="left:585.36px;top:472.00px;font-size:12px;color:#000;font-weight:bold;">Range</div>
<div class="t" style="left:597.90px;top:492.00px;font-size:11.8px;color:#000;transform:translateX(-100%);letter-spacing:-0.3px">50</div>
<div class="t" style="left:597.90px;top:512.00px;font-size:11.8px;color:#000;transform:translateX(-100%);letter-spacing:-0.3px">40</div>
<div class="t" style="left:597.90px;top:531.00px;font-size:11.8px;color:#000;transform:translateX(-100%);letter-spacing:-0.3px">30</div>
<div class="t" style="left:597.90px;top:550.00px;font-size:11.8px;color:#000;transform:translateX(-100%);letter-spacing:-0.3px">20</div>
<div class="t" style="left:597.90px;top:569.00px;font-size:11.8px;color:#000;transform:translateX(-100%);letter-spacing:-0.3px">10</div>
<div class="t" style="left:597.90px;top:588.00px;font-size:11.8px;color:#000;transform:translateX(-100%);letter-spacing:-0.3px">0</div>
<svg style="left:606px;top:486px" width="29" height="10"><path d="M1 7.5 L14.5 1 L28 7.5 Z" fill="#8a8a8a"/><rect x="1" y="7" width="27" height="1.3" fill="#555"/></svg>
<div class="a" style="left:609px;top:495px;width:23px;height:100px;background:#b3b3b3;border-left:2px solid #6e6e6e;border-top:1px solid #6e6e6e;border-right:2px solid #e0e0e0;border-bottom:2px solid #e0e0e0"></div>
<div class="a" style="left:611px;top:579px;width:19px;height:14px;background:#999999"></div>
<svg style="left:606px;top:596px" width="29" height="10"><path d="M1 1.5 L28 1.5 L14.5 8.5 Z" fill="#8a8a8a"/><path d="M28 1.5 L14.5 8.5" stroke="#333" stroke-width="1"/></svg>
<div class="a" style="left:606px;top:569px;width:29px;height:11px;background:#000"></div>
<div class="a" style="left:608px;top:573px;width:25px;height:1px;background:#8a8a8a"></div>
<div class="a" style="left:584px;top:622px;width:54px;height:36px;background:#b3b3b3;border:1px solid #000;box-shadow:inset 2px 2px 0 #e6e6e6, inset -2px -2px 0 #5e5e5e"></div>
<div class="t" style="left:610.90px;top:628.00px;font-size:12px;color:#000;font-weight:bold;transform:translateX(-50%);letter-spacing:-0.4px">Zero</div>
<div class="t" style="left:611.30px;top:641.00px;font-size:12px;color:#000;font-weight:bold;transform:translateX(-50%);letter-spacing:-0.4px">Amps</div>
<div class="t" style="left:701.19px;top:125.00px;font-size:15.85px;color:#000;font-weight:bold;">Electrical Measurements</div>
<div class="t" style="left:682.51px;top:166.00px;font-size:11.35px;color:#000;text-decoration:underline;text-decoration-thickness:1px;text-underline-offset:0.6px;-webkit-text-stroke:0.45px #000">Ch1 Trigger Source</div>
<div class="t" style="left:682.52px;top:186.00px;font-size:11.2px;color:#000;font-weight:bold;">Amps</div>
<div class="t" style="left:760.39px;top:184.00px;font-size:11.6px;color:#000;font-weight:bold;">Volts</div>
<svg style="left:735px;top:179px" width="27" height="22"><path d="M5.5 8 L21.5 1 M5.5 13.5 L21.5 20" fill="none" stroke="#4a4a4a" stroke-width="1"/><circle cx="4" cy="10.8" r="3" fill="#c4c4c4" stroke="#e8e8e8" stroke-width="1"/><path d="M5.5 8.5 L5.5 13.5" stroke="#555" stroke-width="1"/><rect x="22" y="2" width="3.2" height="17" fill="#3a3a3a" stroke="#707070" stroke-width="0.6"/></svg>
<div class="t" style="left:826.90px;top:162.00px;font-size:11.5px;color:#000;font-weight:bold;">Fundamental Frequency</div>
<div class="nb" style="left:837px;top:176px;width:65px;height:29px"><div class="in"></div></div>
<div class="t" style="left:840.18px;top:184.00px;font-size:16px;color:#000;letter-spacing:-0.4px">60.0</div>
<div class="t" style="left:909.56px;top:187.00px;font-size:12px;color:#000;font-weight:bold;">Hz</div>
<div class="a" style="left:690px;top:213px;width:299px;height:1px;background:#000"></div>
<div class="a" style="left:795px;top:221px;width:1px;height:250px;background:#000"></div>
<div class="a" style="left:925px;top:221px;width:1px;height:250px;background:#000"></div>
<div class="t" style="left:675.48px;top:225.00px;font-size:11.7px;color:#000;font-weight:bold;">V1 RMS</div>
<div class="nb" style="left:674px;top:239px;width:115px;height:29px"><div class="in"></div></div>
<div class="t" style="left:679.79px;top:247.00px;font-size:15.9px;color:#000;letter-spacing:0px">14.08</div>
<svg style="left:730.5px;top:244px" width="20" height="18"><path d="M1 16 L13 1 M1 16.5 L19 16.5" fill="none" stroke="#000" stroke-width="1"/></svg>
<div class="t" style="left:742.03px;top:247.00px;font-size:11px;color:#000;font-weight:bold;letter-spacing:-0.3px">-1.6</div>
<div class="t" style="left:675.48px;top:286.00px;font-size:11.7px;color:#000;font-weight:bold;">V2 RMS</div>
<div class="nb" style="left:674px;top:300px;width:115px;height:29px"><div class="in"></div></div>
<div class="t" style="left:679.79px;top:307.00px;font-size:15.9px;color:#000;letter-spacing:0px">0.00</div>
<svg style="left:730.5px;top:305px" width="20" height="18"><path d="M1 16 L13 1 M1 16.5 L19 16.5" fill="none" stroke="#000" stroke-width="1"/></svg>
<div class="t" style="left:742.03px;top:308.00px;font-size:11px;color:#000;font-weight:bold;letter-spacing:-0.3px">0.0</div>
<div class="t" style="left:675.48px;top:347.00px;font-size:11.7px;color:#000;font-weight:bold;">V3 RMS</div>
<div class="nb" style="left:674px;top:361px;width:115px;height:29px"><div class="in"></div></div>
<div class="t" style="left:679.79px;top:369.00px;font-size:15.9px;color:#000;letter-spacing:0px">0.00</div>
<svg style="left:730.5px;top:366px" width="20" height="18"><path d="M1 16 L13 1 M1 16.5 L19 16.5" fill="none" stroke="#000" stroke-width="1"/></svg>
<div class="t" style="left:742.03px;top:369.00px;font-size:11px;color:#000;font-weight:bold;letter-spacing:-0.3px">0.0</div>
<div class="t" style="left:803.48px;top:223.00px;font-size:11.7px;color:#000;font-weight:bold;">A1 RMS</div>
<div class="nb" style="left:802px;top:238px;width:115px;height:29px"><div class="in"></div></div>
<div class="t" style="left:807.79px;top:245.00px;font-size:15.9px;color:#000;letter-spacing:0px">0.99</div>
<svg style="left:857px;top:243px" width="20" height="18"><path d="M1 16 L13 1 M1 16.5 L19 16.5" fill="none" stroke="#000" stroke-width="1"/></svg>
<div class="t" style="left:868.53px;top:246.00px;font-size:11px;color:#000;font-weight:bold;letter-spacing:-0.3px">-41.4</div>
<div class="t" style="left:803.48px;top:285.00px;font-size:11.7px;color:#000;font-weight:bold;">A2 RMS</div>
<div class="nb" style="left:802px;top:300px;width:115px;height:29px"><div class="in"></div></div>
<div class="t" style="left:807.79px;top:307.00px;font-size:15.9px;color:#000;letter-spacing:0px">0.64</div>
<svg style="left:857px;top:305px" width="20" height="18"><path d="M1 16 L13 1 M1 16.5 L19 16.5" fill="none" stroke="#000" stroke-width="1"/></svg>
<div class="t" style="left:868.53px;top:308.00px;font-size:11px;color:#000;font-weight:bold;letter-spacing:-0.3px">-86.8</div>
<div class="t" style="left:803.48px;top:346.00px;font-size:11.7px;color:#000;font-weight:bold;">A3 RMS</div>
<div class="nb" style="left:802px;top:361px;width:115px;height:29px"><div class="in"></div></div>
<div class="t" style="left:807.79px;top:369.00px;font-size:15.9px;color:#000;letter-spacing:0px">0.00</div>
<svg style="left:857px;top:366px" width="20" height="18"><path d="M1 16 L13 1 M1 16.5 L19 16.5" fill="none" stroke="#000" stroke-width="1"/></svg>
<div class="t" style="left:868.53px;top:369.00px;font-size:11px;color:#000;font-weight:bold;letter-spacing:-0.3px">0.0</div>
<div class="t" style="left:937.37px;top:225.00px;font-size:11.9px;color:#000;font-weight:bold;">Ch1 Watts</div>
<div class="t" style="left:937.37px;top:287.00px;font-size:11.9px;color:#000;font-weight:bold;">Ch2 Watts</div>
<div class="t" style="left:937.37px;top:348.00px;font-size:11.9px;color:#000;font-weight:bold;">Ch3 Watts</div>
<div class="nb" style="left:937px;top:238px;width:66px;height:29px"><div class="in"></div></div>
<div class="t" style="left:941.79px;top:246.00px;font-size:15.8px;color:#000;letter-spacing:0px">10.7</div>
<div class="nb" style="left:937px;top:300px;width:66px;height:29px"><div class="in"></div></div>
<div class="t" style="left:941.79px;top:308.00px;font-size:15.8px;color:#000;letter-spacing:0px">0.0</div>
<div class="nb" style="left:937px;top:361px;width:66px;height:29px"><div class="in"></div></div>
<div class="t" style="left:941.79px;top:369.00px;font-size:15.8px;color:#000;letter-spacing:0px">0.0</div>
<div class="t" style="left:686.08px;top:404.00px;font-size:14.6px;color:#000;font-weight:bold;">Avg Volts</div>
<div class="nb" style="left:686px;top:424px;width:80px;height:29px"><div class="in"></div></div>
<div class="t" style="left:691.05px;top:431.00px;font-size:16.5px;color:#000;font-weight:bold;letter-spacing:0.8px">14.08</div>
<div class="t" style="left:814.34px;top:401.00px;font-size:15.1px;color:#000;font-weight:bold;">Avg Amps</div>
<div class="nb" style="left:817px;top:424px;width:80px;height:29px"><div class="in"></div></div>
<div class="t" style="left:821.05px;top:431.00px;font-size:16.5px;color:#000;font-weight:bold;letter-spacing:1px">0.81</div>
<div class="t" style="left:929.95px;top:404.00px;font-size:14.95px;color:#000;font-weight:bold;">Tot Power</div>
<div class="nb" style="left:937px;top:424px;width:66px;height:29px"><div class="in"></div></div>
<div class="t" style="left:942.14px;top:430.00px;font-size:16.5px;color:#000;font-weight:bold;letter-spacing:1px">10.7</div>
<div class="t" style="left:681.00px;top:496.00px;font-size:11.5px;color:#000;font-weight:bold;">Sampling Period (mS)</div>
<svg style="left:683px;top:513px" width="9" height="21"><path d="M1 10 L7 1 L7 19 Z" fill="#8e8e8e"/><rect x="7" y="1" width="1.2" height="18" fill="#f0f0f0"/></svg>
<div class="a" style="left:691px;top:514px;width:295px;height:18px;background:#333;border:1px solid #1e1e1e"></div>
<svg style="left:985px;top:513px" width="11" height="21"><rect x="0" y="1" width="2" height="18" fill="#9a9a9a"/><path d="M2 1 L9.5 10 L2 19 Z" fill="#8e8e8e"/><path d="M9.5 10 L2 19" stroke="#444" stroke-width="1"/></svg>
<div class="a" style="left:891px;top:511px;width:10px;height:24px;background:#3a8ef0;border-left:1px solid #78bcff;border-right:1px solid #1a5aa8;border-top:1px solid #90c8ff;border-bottom:1px solid #1a5aa8"></div>
<div class="a" style="left:895px;top:512px;width:1px;height:22px;background:#a8d4ff"></div>
<div class="a" style="left:896px;top:511px;width:1px;height:24px;background:#1a4a90"></div>
<div class="a" style="left:693px;top:536px;width:1px;height:5px;background:#000"></div>
<div class="a" style="left:713px;top:537px;width:1px;height:3px;background:#000"></div>
<div class="a" style="left:725px;top:537px;width:1px;height:3px;background:#000"></div>
<div class="a" style="left:733px;top:537px;width:1px;height:3px;background:#000"></div>
<div class="a" style="left:740px;top:537px;width:1px;height:3px;background:#000"></div>
<div class="a" style="left:745px;top:537px;width:1px;height:3px;background:#000"></div>
<div class="a" style="left:750px;top:537px;width:1px;height:3px;background:#000"></div>
<div class="a" style="left:754px;top:537px;width:1px;height:3px;background:#000"></div>
<div class="a" style="left:757px;top:537px;width:1px;height:3px;background:#000"></div>
<div class="a" style="left:760px;top:536px;width:1px;height:5px;background:#000"></div>
<div class="a" style="left:781px;top:537px;width:1px;height:3px;background:#000"></div>
<div class="a" style="left:793px;top:537px;width:1px;height:3px;background:#000"></div>
<div class="a" style="left:801px;top:537px;width:1px;height:3px;background:#000"></div>
<div class="a" style="left:808px;top:537px;width:1px;height:3px;background:#000"></div>
<div class="a" style="left:813px;top:537px;width:1px;height:3px;background:#000"></div>
<div class="a" style="left:818px;top:537px;width:1px;height:3px;background:#000"></div>
<div class="a" style="left:822px;top:537px;width:1px;height:3px;background:#000"></div>
<div class="a" style="left:825px;top:537px;width:1px;height:3px;background:#000"></div>
<div class="a" style="left:828px;top:536px;width:1px;height:5px;background:#000"></div>
<div class="a" style="left:849px;top:537px;width:1px;height:3px;background:#000"></div>
<div class="a" style="left:861px;top:537px;width:1px;height:3px;background:#000"></div>
<div class="a" style="left:869px;top:537px;width:1px;height:3px;background:#000"></div>
<div class="a" style="left:876px;top:537px;width:1px;height:3px;background:#000"></div>
<div class="a" style="left:881px;top:537px;width:1px;height:3px;background:#000"></div>
<div class="a" style="left:885px;top:537px;width:1px;height:3px;background:#000"></div>
<div class="a" style="left:889px;top:537px;width:1px;height:3px;background:#000"></div>
<div class="a" style="left:893px;top:537px;width:1px;height:3px;background:#000"></div>
<div class="a" style="left:896px;top:536px;width:1px;height:5px;background:#000"></div>
<div class="a" style="left:916px;top:537px;width:1px;height:3px;background:#000"></div>
<div class="a" style="left:928px;top:537px;width:1px;height:3px;background:#000"></div>
<div class="a" style="left:937px;top:537px;width:1px;height:3px;background:#000"></div>
<div class="a" style="left:943px;top:537px;width:1px;height:3px;background:#000"></div>
<div class="a" style="left:949px;top:537px;width:1px;height:3px;background:#000"></div>
<div class="a" style="left:953px;top:537px;width:1px;height:3px;background:#000"></div>
<div class="a" style="left:957px;top:537px;width:1px;height:3px;background:#000"></div>
<div class="a" style="left:961px;top:537px;width:1px;height:3px;background:#000"></div>
<div class="a" style="left:964px;top:536px;width:1px;height:5px;background:#000"></div>
<div class="a" style="left:984px;top:537px;width:1px;height:3px;background:#000"></div>
<div class="a" style="left:984px;top:536px;width:1px;height:5px;background:#000"></div>
<div class="t" style="left:692.20px;top:543.00px;font-size:12px;color:#000;font-weight:bold;transform:translateX(-50%);">0.1</div>
<div class="t" style="left:761.40px;top:543.00px;font-size:12px;color:#000;font-weight:bold;transform:translateX(-50%);">1</div>
<div class="t" style="left:828.40px;top:543.00px;font-size:12px;color:#000;font-weight:bold;transform:translateX(-50%);">10</div>
<div class="t" style="left:895.80px;top:543.00px;font-size:12px;color:#000;font-weight:bold;transform:translateX(-50%);">100</div>
<div class="t" style="left:984.10px;top:543.00px;font-size:12px;color:#000;font-weight:bold;transform:translateX(-50%);">2000</div>
<div class="t" style="left:688.69px;top:578.00px;font-size:11.6px;color:#000;font-weight:bold;">Filter</div>
<div class="a" style="left:679px;top:594px;width:57px;height:26px;background:#b3b3b3;border:1px solid #000;box-shadow:inset 2px 2px 0 #e6e6e6, inset -2px -2px 0 #5e5e5e"></div>
<div class="t" style="left:706.50px;top:602.00px;font-size:12px;color:#000;font-weight:bold;transform:translateX(-50%);letter-spacing:-0.6px">OFF</div>
<div class="a" style="left:762px;top:570px;width:126px;height:17px;background:#cdcdcd"></div>
<div class="t" style="left:762.68px;top:573.00px;font-size:11.7px;color:#8a8a8a;font-weight:bold;">Cutoff Frequency (Hz)</div>
<div class="a" style="left:753px;top:595px;width:9px;height:21px;background:#d0d0d0"></div>
<svg style="left:753px;top:595px" width="9" height="21"><path d="M7.5 2 L1.5 10.5 L7.5 19" fill="none" stroke="#9a9a9a" stroke-width="1"/></svg>
<div class="a" style="left:760px;top:596px;width:229px;height:19px;background:#929292;border-top:1px solid #7e7e7e;border-left:2px solid #858585;border-right:1px solid #d0d0d0;border-bottom:1px solid #d0d0d0"></div>
<div class="a" style="left:989px;top:595px;width:9px;height:21px;background:#d0d0d0"></div>
<svg style="left:989px;top:595px" width="9" height="21"><path d="M1.5 2 L7.5 10.5 L1.5 19" fill="none" stroke="#9a9a9a" stroke-width="1"/></svg>
<div class="a" style="left:751px;top:621px;width:259px;height:22px;background:#d4d4d4"></div>
<div class="a" style="left:867px;top:589px;width:13px;height:7px;background:#cdcdcd"></div>
<div class="a" style="left:867px;top:615px;width:13px;height:6px;background:#cdcdcd"></div>
<div class="a" style="left:762px;top:615px;width:105px;height:6px;background:#b9b9b9"></div>
<div class="a" style="left:880px;top:615px;width:109px;height:6px;background:#b9b9b9"></div>
<div class="a" style="left:763px;top:622px;width:1px;height:5px;background:#777"></div>
<div class="a" style="left:785px;top:622px;width:1px;height:3px;background:#8a8a8a"></div>
<div class="a" style="left:799px;top:622px;width:1px;height:3px;background:#8a8a8a"></div>
<div class="a" style="left:808px;top:622px;width:1px;height:3px;background:#8a8a8a"></div>
<div class="a" style="left:815px;top:622px;width:1px;height:3px;background:#8a8a8a"></div>
<div class="a" style="left:821px;top:622px;width:1px;height:3px;background:#8a8a8a"></div>
<div class="a" style="left:826px;top:622px;width:1px;height:3px;background:#8a8a8a"></div>
<div class="a" style="left:830px;top:622px;width:1px;height:3px;background:#8a8a8a"></div>
<div class="a" style="left:834px;top:622px;width:1px;height:3px;background:#8a8a8a"></div>
<div class="a" style="left:838px;top:622px;width:1px;height:5px;background:#777"></div>
<div class="a" style="left:860px;top:622px;width:1px;height:3px;background:#8a8a8a"></div>
<div class="a" style="left:873px;top:622px;width:1px;height:3px;background:#8a8a8a"></div>
<div class="a" style="left:883px;top:622px;width:1px;height:3px;background:#8a8a8a"></div>
<div class="a" style="left:890px;top:622px;width:1px;height:3px;background:#8a8a8a"></div>
<div class="a" style="left:896px;top:622px;width:1px;height:3px;background:#8a8a8a"></div>
<div class="a" style="left:901px;top:622px;width:1px;height:3px;background:#8a8a8a"></div>
<div class="a" style="left:905px;top:622px;width:1px;height:3px;background:#8a8a8a"></div>
<div class="a" style="left:909px;top:622px;width:1px;height:3px;background:#8a8a8a"></div>
<div class="a" style="left:912px;top:622px;width:1px;height:5px;background:#777"></div>
<div class="a" style="left:935px;top:622px;width:1px;height:3px;background:#8a8a8a"></div>
<div class="a" style="left:948px;top:622px;width:1px;height:3px;background:#8a8a8a"></div>
<div class="a" style="left:957px;top:622px;width:1px;height:3px;background:#8a8a8a"></div>
<div class="a" style="left:965px;top:622px;width:1px;height:3px;background:#8a8a8a"></div>
<div class="a" style="left:971px;top:622px;width:1px;height:3px;background:#8a8a8a"></div>
<div class="a" style="left:976px;top:622px;width:1px;height:3px;background:#8a8a8a"></div>
<div class="a" style="left:980px;top:622px;width:1px;height:3px;background:#8a8a8a"></div>
<div class="a" style="left:984px;top:622px;width:1px;height:3px;background:#8a8a8a"></div>
<div class="a" style="left:987px;top:622px;width:1px;height:5px;background:#777"></div>
<div class="t" style="left:763.00px;top:629.00px;font-size:12px;color:#7c7c7c;transform:translateX(-50%);-webkit-text-stroke:0.2px #7c7c7c">100</div>
<div class="t" style="left:838.50px;top:629.00px;font-size:12px;color:#7c7c7c;transform:translateX(-50%);-webkit-text-stroke:0.2px #7c7c7c">1000</div>
<div class="t" style="left:912.00px;top:629.00px;font-size:12px;color:#7c7c7c;transform:translateX(-50%);-webkit-text-stroke:0.2px #7c7c7c">10000</div>
<div class="t" style="left:987.50px;top:629.00px;font-size:12px;color:#7c7c7c;transform:translateX(-50%);-webkit-text-stroke:0.2px #7c7c7c">100000</div>
<svg style="left:866px;top:589px" width="16" height="34"><path d="M1.5 1 L13.5 1 L7.5 33 Z" fill="#8cc2f8"/><path d="M1.5 1 L13.5 1" stroke="#b8dcff" stroke-width="1.5"/></svg>
<div class="a" style="left:127px;top:705px;width:79px;height:41px;background:#b3b3b3;border:1px solid #000;box-shadow:inset 2px 2px 0 #e6e6e6, inset -2px -2px 0 #5e5e5e"></div>
<div class="t" style="left:166.50px;top:721.00px;font-size:12.3px;color:#ff0000;font-weight:bold;transform:translateX(-50%);">Pause</div>
<div class="a" style="left:244px;top:705px;width:81px;height:41px;background:#d4d4d4;border:1px solid #747474;box-shadow:inset 2px 2px 0 #ececec, inset -2px -2px 0 #a6a6a6"></div>
<div class="t" style="left:283.50px;top:714.00px;font-size:11.5px;color:#7e7e7e;font-weight:bold;transform:translateX(-50%);">Save</div>
<div class="t" style="left:283.50px;top:727.00px;font-size:11.5px;color:#7e7e7e;font-weight:bold;transform:translateX(-50%);">Data</div>
<div class="a" style="left:363px;top:707px;width:7px;height:23px;background:#d0d0d0"></div>
<svg style="left:363px;top:707px" width="7" height="23"><path d="M5.5 2 L1 11.5 L5.5 21" fill="none" stroke="#9a9a9a" stroke-width="1"/></svg>
<div class="a" style="left:369px;top:708px;width:185px;height:21px;background:#929292;border-top:1px solid #7c7c7c;border-left:1px solid #7c7c7c;border-right:1px solid #c8c8c8;border-bottom:2px solid #c4c4c4"></div>
<div class="a" style="left:554px;top:707px;width:9px;height:23px;background:#d0d0d0"></div>
<svg style="left:554px;top:707px" width="9" height="23"><path d="M1.5 2 L7 11.5 L1.5 21" fill="none" stroke="#9a9a9a" stroke-width="1"/></svg>
<div class="a" style="left:369px;top:733px;width:190px;height:21px;background:#d4d4d4"></div>
<div class="a" style="left:377px;top:734px;width:1px;height:3px;background:#7a7a7a"></div>
<div class="a" style="left:386px;top:734px;width:1px;height:3px;background:#7a7a7a"></div>
<div class="a" style="left:395px;top:734px;width:1px;height:3px;background:#7a7a7a"></div>
<div class="a" style="left:405px;top:734px;width:1px;height:3px;background:#7a7a7a"></div>
<div class="a" style="left:414px;top:734px;width:1px;height:3px;background:#7a7a7a"></div>
<div class="a" style="left:423px;top:734px;width:1px;height:3px;background:#7a7a7a"></div>
<div class="a" style="left:432px;top:734px;width:1px;height:3px;background:#7a7a7a"></div>
<div class="a" style="left:441px;top:734px;width:1px;height:3px;background:#7a7a7a"></div>
<div class="a" style="left:450px;top:734px;width:1px;height:3px;background:#7a7a7a"></div>
<div class="a" style="left:459px;top:734px;width:1px;height:3px;background:#7a7a7a"></div>
<div class="a" style="left:468px;top:734px;width:1px;height:3px;background:#7a7a7a"></div>
<div class="a" style="left:478px;top:734px;width:1px;height:3px;background:#7a7a7a"></div>
<div class="a" style="left:487px;top:734px;width:1px;height:3px;background:#7a7a7a"></div>
<div class="a" style="left:496px;top:734px;width:1px;height:3px;background:#7a7a7a"></div>
<div class="a" style="left:505px;top:734px;width:1px;height:3px;background:#7a7a7a"></div>
<div class="a" style="left:514px;top:734px;width:1px;height:3px;background:#7a7a7a"></div>
<div class="a" style="left:523px;top:734px;width:1px;height:3px;background:#7a7a7a"></div>
<div class="a" style="left:532px;top:734px;width:1px;height:3px;background:#7a7a7a"></div>
<div class="a" style="left:542px;top:734px;width:1px;height:3px;background:#7a7a7a"></div>
<div class="a" style="left:373px;top:734px;width:1px;height:6px;background:#6a6a6a"></div>
<div class="a" style="left:414px;top:734px;width:1px;height:6px;background:#6a6a6a"></div>
<div class="a" style="left:459px;top:734px;width:1px;height:6px;background:#6a6a6a"></div>
<div class="a" style="left:505px;top:734px;width:1px;height:6px;background:#6a6a6a"></div>
<div class="a" style="left:551px;top:734px;width:1px;height:6px;background:#6a6a6a"></div>
<div class="t" style="left:373.60px;top:740.00px;font-size:12.2px;color:#7e7e7e;transform:translateX(-50%);">1</div>
<div class="t" style="left:414.10px;top:740.00px;font-size:12.2px;color:#7e7e7e;transform:translateX(-50%);">10</div>
<div class="t" style="left:460.10px;top:740.00px;font-size:12.2px;color:#7e7e7e;transform:translateX(-50%);">20</div>
<div class="t" style="left:505.40px;top:740.00px;font-size:12.2px;color:#7e7e7e;transform:translateX(-50%);">30</div>
<div class="t" style="left:551.10px;top:740.00px;font-size:12.2px;color:#7e7e7e;transform:translateX(-50%);">40</div>
<div class="a" style="left:369px;top:705px;width:8px;height:27px;background:#96c6f6;border-top:1px solid #c0dcf8;border-bottom:1px solid #78a8e0"></div>
<div class="a" style="left:372px;top:706px;width:1px;height:25px;background:#cfe6ff"></div>
<div class="a" style="left:373px;top:705px;width:1px;height:27px;background:#7494bc"></div>
<div class="a" style="left:570px;top:708px;width:35px;height:15px;background:#cdcdcd"></div>
<div class="t" style="left:571.73px;top:711.00px;font-size:11px;color:#7e7e7e;font-weight:bold;">Zoom</div>
<div class="a" style="left:646px;top:707px;width:7px;height:19px;background:#d0d0d0"></div>
<svg style="left:646px;top:707px" width="7" height="19"><path d="M5.5 2 L1 9.5 L5.5 17" fill="none" stroke="#9a9a9a" stroke-width="1"/></svg>
<div class="a" style="left:652px;top:708px;width:194px;height:17px;background:#929292;border-top:1px solid #7c7c7c;border-left:1px solid #7c7c7c;border-right:1px solid #c8c8c8;border-bottom:2px solid #c4c4c4"></div>
<div class="a" style="left:846px;top:707px;width:9px;height:19px;background:#d0d0d0"></div>
<svg style="left:846px;top:707px" width="9" height="19"><path d="M1.5 2 L7 9.5 L1.5 17" fill="none" stroke="#9a9a9a" stroke-width="1"/></svg>
<div class="a" style="left:652px;top:728px;width:197px;height:22px;background:#d4d4d4"></div>
<div class="a" style="left:665px;top:729px;width:1px;height:3px;background:#7a7a7a"></div>
<div class="a" style="left:674px;top:729px;width:1px;height:3px;background:#7a7a7a"></div>
<div class="a" style="left:684px;top:729px;width:1px;height:3px;background:#7a7a7a"></div>
<div class="a" style="left:703px;top:729px;width:1px;height:3px;background:#7a7a7a"></div>
<div class="a" style="left:712px;top:729px;width:1px;height:3px;background:#7a7a7a"></div>
<div class="a" style="left:722px;top:729px;width:1px;height:3px;background:#7a7a7a"></div>
<div class="a" style="left:740px;top:729px;width:1px;height:3px;background:#7a7a7a"></div>
<div class="a" style="left:750px;top:729px;width:1px;height:3px;background:#7a7a7a"></div>
<div class="a" style="left:759px;top:729px;width:1px;height:3px;background:#7a7a7a"></div>
<div class="a" style="left:778px;top:729px;width:1px;height:3px;background:#7a7a7a"></div>
<div class="a" style="left:787px;top:729px;width:1px;height:3px;background:#7a7a7a"></div>
<div class="a" style="left:797px;top:729px;width:1px;height:3px;background:#7a7a7a"></div>
<div class="a" style="left:816px;top:729px;width:1px;height:3px;background:#7a7a7a"></div>
<div class="a" style="left:825px;top:729px;width:1px;height:3px;background:#7a7a7a"></div>
<div class="a" style="left:834px;top:729px;width:1px;height:3px;background:#7a7a7a"></div>
<div class="a" style="left:656px;top:729px;width:1px;height:6px;background:#6a6a6a"></div>
<div class="a" style="left:693px;top:729px;width:1px;height:6px;background:#6a6a6a"></div>
<div class="a" style="left:731px;top:729px;width:1px;height:6px;background:#6a6a6a"></div>
<div class="a" style="left:768px;top:729px;width:1px;height:6px;background:#6a6a6a"></div>
<div class="a" style="left:806px;top:729px;width:1px;height:6px;background:#6a6a6a"></div>
<div class="a" style="left:844px;top:729px;width:1px;height:6px;background:#6a6a6a"></div>
<div class="t" style="left:656.20px;top:737.00px;font-size:12.2px;color:#7e7e7e;transform:translateX(-50%);">0</div>
<div class="t" style="left:693.80px;top:737.00px;font-size:12.2px;color:#7e7e7e;transform:translateX(-50%);">0.2</div>
<div class="t" style="left:731.40px;top:737.00px;font-size:12.2px;color:#7e7e7e;transform:translateX(-50%);">0.4</div>
<div class="t" style="left:769.00px;top:737.00px;font-size:12.2px;color:#7e7e7e;transform:translateX(-50%);">0.6</div>
<div class="t" style="left:806.60px;top:737.00px;font-size:12.2px;color:#7e7e7e;transform:translateX(-50%);">0.8</div>
<div class="t" style="left:844.20px;top:737.00px;font-size:12.2px;color:#7e7e7e;transform:translateX(-50%);">1</div>
<div class="a" style="left:652px;top:705px;width:8px;height:23px;background:#96c6f6;border-top:1px solid #c0dcf8;border-bottom:1px solid #78a8e0"></div>
<div class="a" style="left:655px;top:706px;width:1px;height:21px;background:#cfe6ff"></div>
<div class="a" style="left:656px;top:705px;width:1px;height:23px;background:#7494bc"></div>
<div class="a" style="left:860px;top:708px;width:46px;height:15px;background:#cdcdcd"></div>
<div class="t" style="left:861.26px;top:711.00px;font-size:10.6px;color:#7e7e7e;font-weight:bold;">Position</div>
</div></body></html>
